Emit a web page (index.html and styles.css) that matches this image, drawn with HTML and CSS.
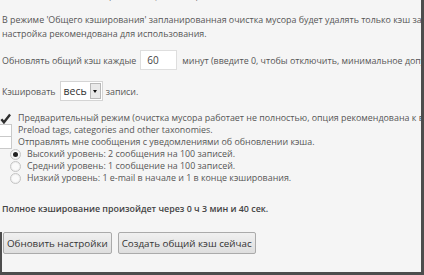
FILE: index.html
```html
<!DOCTYPE html>
<html lang="ru">
<head>
  <meta charset="UTF-8" />
  <title>Кэширование</title>
  <link rel="stylesheet" href="styles.css">
</head>
<body>
  <div class="panel">
    <div class="cutoff">настройки общего кэширования, и включите её, только если хотите</div>
    <p class="intro">В режиме 'Общего кэширования' запланированная очистка мусора будет удалять только кэш за пределами срока<br>настройка рекомендована для использования.</p>

    <div class="row refresh">
      Обновлять общий кэш каждые
      <span class="field">60</span>
      минут (введите 0, чтобы отключить, минимальное допустимое значение 30 минут).
    </div>

    <div class="row cache">
      Кэшировать
      <span class="select">весь<span class="arrow"></span></span>
      записи.
    </div>

    <div class="options">
      <div class="check-row">
        <span class="box checked">
          <svg viewBox="0 0 12 12" width="12" height="12"><path d="M1.5 6.2 L4.3 9.6 L11 1.2" fill="none" stroke="#2f2f2f" stroke-width="2.6"/></svg>
        </span>
        Предварительный режим (очистка мусора работает не полностью, опция рекомендована к включению).
      </div>
      <div class="check-row"><span class="box"></span>Preload tags, categories and other taxonomies.</div>
      <div class="check-row"><span class="box"></span>Отправлять мне сообщения с уведомлениями об обновлении кэша.</div>
      <div class="radio-row"><span class="radio on"></span>Высокий уровень: 2 сообщения на 100 записей.</div>
      <div class="radio-row"><span class="radio"></span>Средний уровень: 1 сообщение на 100 записей.</div>
      <div class="radio-row"><span class="radio"></span>Низкий уровень: 1 e-mail в начале и 1 в конце кэширования.</div>
    </div>

    <p class="eta">Полное кэширование произойдет через 0 ч 3 мин и 40 сек.</p>

    <div class="actions">
      <button>Обновить настройки</button>
      <button>Создать общий кэш сейчас</button>
    </div>
  </div>
</body>
</html>
```

FILE: styles.css
```css
body {
  margin: 0;
  background-color: #f5f5f5;
  font-family: 'Open Sans', sans-serif;
  font-size: 8.9px;
  color: #555;
}

.panel {
  height: 272px;
  border-right: 3px solid #4d4d4d;
  border-bottom: 3px solid #4d4d4d;
  overflow: hidden;
  white-space: nowrap;
}

.cutoff {
  height: 3px;
  line-height: 14px;
  overflow: hidden;
  margin-left: 90px;
  color: #777;
  display: flex;
  align-items: flex-end;
}

.intro {
  margin: 10px 0 0 2px;
  line-height: 14px;
}

.row {
  display: flex;
  align-items: center;
  gap: 3px;
  margin-left: 2px;
  height: 20px;
}

.refresh {
  margin-top: 9px;
}

.cache {
  margin-top: 11px;
}

.field {
  flex-shrink: 0;
  width: 29px;
  height: 18px;
  line-height: 18px;
  padding-left: 6px;
  background-color: #fff;
  border: 1px solid #dedede;
  color: #444;
  font-size: 10px;
  margin: 0 2px 0 1px;
}

.select {
  flex-shrink: 0;
  display: flex;
  align-items: center;
  height: 18px;
  padding-left: 3px;
  background-color: #fff;
  border: 1px solid #d4d4d4;
  color: #333;
  font-size: 10.5px;
  gap: 3px;
  margin: 0 0 0 1px;
}

.arrow {
  width: 9px;
  height: 14px;
  margin-right: 1px;
  background-color: #e9e9e9;
  border: 1px solid #b8b8b8;
  position: relative;
}

.arrow::after {
  content: "";
  position: absolute;
  left: 2px;
  top: 6px;
  border-left: 2.5px solid transparent;
  border-right: 2.5px solid transparent;
  border-top: 3px solid #111;
}

.options {
  margin-top: 11px;
}

.check-row,
.radio-row {
  display: flex;
  align-items: center;
  height: 12px;
  line-height: 12px;
}

.box {
  width: 11px;
  height: 11px;
  margin-left: -1px;
  margin-right: 6px;
  background-color: #fff;
  border: 1px solid #c9c9c9;
  display: flex;
}

.box.checked {
  background-color: transparent;
  border-color: transparent;
}

.radio-row {
  padding-left: 10px;
}

.radio {
  width: 9px;
  height: 9px;
  margin-right: 6px;
  border-radius: 50%;
  border: 1px solid #c4c4c4;
  background-color: #fafafa;
  box-shadow: inset 0 0 0 1px #eee;
  position: relative;
}

.radio.on::after {
  content: "";
  position: absolute;
  left: 2px;
  top: 2px;
  width: 5px;
  height: 5px;
  border-radius: 50%;
  background-color: #222;
}

.eta {
  margin: 18px 0 0 2px;
  line-height: 14px;
  font-weight: 600;
  color: #444;
}

.actions {
  display: flex;
  gap: 6px;
  margin-top: 16px;
  padding-left: 1px;
  border-left: 2px solid #4d4d4d;
  height: 60px;
}

button {
  height: 22px;
  padding: 0 3px;
  font-family: 'Open Sans', sans-serif;
  font-size: 9.8px;
  color: #333;
  background: linear-gradient(#f0f0f0, #dedede);
  border: 1px solid #aaa;
  border-radius: 2px;
}
```
